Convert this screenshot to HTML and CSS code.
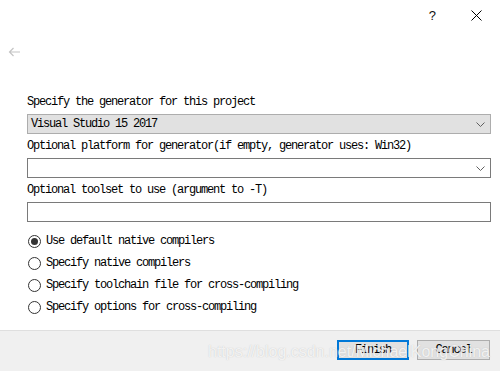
FILE: index.html
```html
<!DOCTYPE html>
<html lang="en">
<head>
    <meta charset="UTF-8">
    <meta name="viewport" content="width=device-width, initial-scale=1.0">
    <title>CMake Generator</title>
    <link rel="stylesheet" href="styles.css">
</head>
<body>
    <div class="dialog">
        <div class="titlebar">
            <span class="help">?</span>
            <span class="close">
                <svg width="11" height="11" viewBox="0 0 11 11">
                    <path d="M0.5 0.5 L10.5 10.5 M10.5 0.5 L0.5 10.5" stroke="#000" stroke-width="1" fill="none"/>
                </svg>
            </span>
        </div>
        <div class="back-row">
            <svg class="back" width="12" height="10" viewBox="0 0 12 10">
                <path d="M12 5 H1.5 M5.5 1 L1.5 5 L5.5 9" stroke="#c4c4c4" stroke-width="1.2" fill="none"/>
            </svg>
        </div>

        <div class="content">
            <div class="label">Specify the generator for this project</div>
            <div class="combo combo-filled">
                <span>Visual Studio 15 2017</span>
                <svg class="chevron" width="9" height="5" viewBox="0 0 9 5">
                    <path d="M0.5 0.5 L4.5 4.5 L8.5 0.5" stroke="#606060" stroke-width="1" fill="none"/>
                </svg>
            </div>

            <div class="label">Optional platform for generator(if empty, generator uses: Win32)</div>
            <div class="combo">
                <span></span>
                <svg class="chevron" width="9" height="5" viewBox="0 0 9 5">
                    <path d="M0.5 0.5 L4.5 4.5 L8.5 0.5" stroke="#606060" stroke-width="1" fill="none"/>
                </svg>
            </div>

            <div class="label">Optional toolset to use (argument to -T)</div>
            <div class="textbox"></div>

            <div class="radios">
                <div class="radio-row"><span class="radio checked"></span>Use default native compilers</div>
                <div class="radio-row"><span class="radio"></span>Specify native compilers</div>
                <div class="radio-row"><span class="radio"></span>Specify toolchain file for cross-compiling</div>
                <div class="radio-row"><span class="radio"></span>Specify options for cross-compiling</div>
            </div>
        </div>

        <div class="footer">
            <button class="btn btn-default">Finish</button>
            <button class="btn">Cancel</button>
            <div class="watermark">https://blog.csdn.net/MichaelKongChina</div>
        </div>
    </div>
</body>
</html>
```

FILE: styles.css
```css
* {
    box-sizing: border-box;
    margin: 0;
    padding: 0;
}

body {
    background-color: #fff;
    width: 500px;
    height: 371px;
    overflow: hidden;
}

.dialog {
    width: 500px;
    height: 371px;
    display: flex;
    flex-direction: column;
    font-family: 'Liberation Mono', 'DejaVu Sans Mono', monospace;
    font-size: 12px;
    letter-spacing: -1.2px;
    color: #000;
}

.titlebar {
    height: 30px;
    display: flex;
    justify-content: flex-end;
    align-items: center;
    padding-right: 18px;
    gap: 35px;
}

.help {
    font-family: 'Liberation Sans', Arial, sans-serif;
    font-size: 13px;
    letter-spacing: 0;
    color: #111;
}

.close {
    display: flex;
    align-items: center;
}

.back-row {
    height: 64px;
    padding-top: 17px;
    padding-left: 8px;
}

.back {
    display: block;
}

.content {
    padding-left: 27px;
    padding-right: 9px;
}

.label {
    height: 16px;
    line-height: 16px;
    margin-bottom: 4px;
    white-space: nowrap;
}

.combo,
.textbox {
    height: 20px;
    border: 1px solid #7a7a7a;
    background-color: #fff;
    margin-bottom: 4px;
}

.combo {
    display: flex;
    align-items: center;
    justify-content: space-between;
    padding-left: 3px;
    padding-right: 5px;
}

.combo-filled {
    background-color: #e1e1e1;
    border-color: #adadad;
}

.chevron {
    display: block;
}

.radios {
    padding-top: 4px;
}

.radio-row {
    height: 22px;
    display: flex;
    align-items: center;
    gap: 5px;
    padding-left: 1px;
    white-space: nowrap;
}

.radio {
    width: 13px;
    height: 13px;
    border: 1px solid #333;
    border-radius: 50%;
    display: flex;
    justify-content: center;
    align-items: center;
    background-color: #fff;
}

.radio.checked::after {
    content: '';
    width: 7px;
    height: 7px;
    border-radius: 50%;
    background-color: #333;
}

.footer {
    position: relative;
    flex: 1;
    margin-top: 12px;
    border-top: 1px solid #dfdfdf;
    background-color: #f0f0f0;
    display: flex;
    justify-content: flex-end;
    align-items: flex-start;
    padding-top: 9px;
    padding-right: 10px;
    gap: 8px;
}

.btn {
    width: 73px;
    height: 20px;
    font-family: 'Liberation Mono', 'DejaVu Sans Mono', monospace;
    font-size: 12px;
    letter-spacing: -1.2px;
    color: #000;
    background-color: #e1e1e1;
    border: 1px solid #adadad;
}

.btn-default {
    width: 72px;
    border: 2px solid #0078d7;
}

.watermark {
    position: absolute;
    left: 208px;
    top: 12px;
    font-family: 'Liberation Sans', Arial, sans-serif;
    font-size: 16px;
    letter-spacing: 0;
    color: rgba(255, 255, 255, 0.8);
    text-shadow: 0 0 1px rgba(170, 170, 170, 0.7);
    white-space: nowrap;
    pointer-events: none;
}
```
